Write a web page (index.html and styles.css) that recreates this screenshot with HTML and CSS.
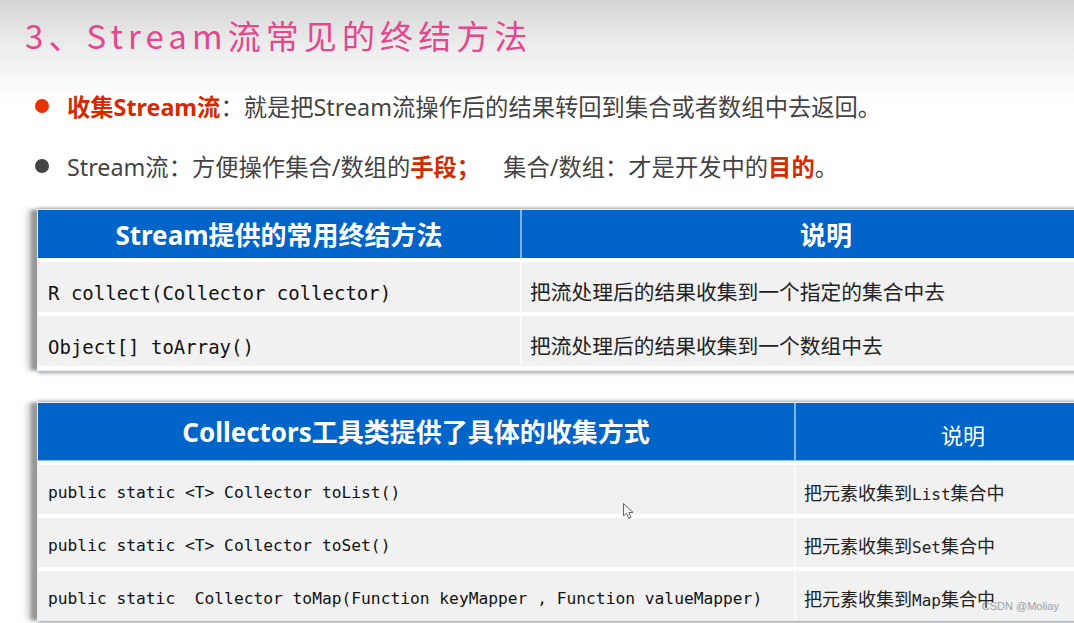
FILE: index.html
```html
<!DOCTYPE html>
<html lang="zh">
<head>
<meta charset="utf-8">
<title>Stream流常见的终结方法</title>
<link rel="stylesheet" href="styles.css">
</head>
<body>
<main class="slide">
  <h1 class="title">3、Stream流常见的终结方法</h1>
  <ul class="points">
    <li class="point point-red"><span class="dot"></span><p><b>收集Stream流</b>：就是把Stream流操作后的结果转回到集合或者数组中去返回。</p></li>
    <li class="point"><span class="dot"></span><p>Stream流：方便操作集合/数组的<b>手段；</b><span class="wide"></span>集合/数组：才是开发中的<b>目的</b>。</p></li>
  </ul>
  <section class="table table-one">
    <div class="cell head main-head">Stream提供的常用终结方法</div>
    <div class="cell head main-head">说明</div>
    <div class="cell code big">R collect(Collector collector)</div>
    <div class="cell desc big">把流处理后的结果收集到一个指定的集合中去</div>
    <div class="cell code big">Object[] toArray()</div>
    <div class="cell desc big">把流处理后的结果收集到一个数组中去</div>
  </section>
  <section class="table table-two">
    <div class="cell head main-head">Collectors工具类提供了具体的收集方式</div>
    <div class="cell head sub-head">说明</div>
    <div class="cell code">public static &lt;T&gt; Collector toList()</div>
    <div class="cell desc"><span>把元素收集到<span class="mono">List</span>集合中</span></div>
    <div class="cell code">public static &lt;T&gt; Collector toSet()</div>
    <div class="cell desc"><span>把元素收集到<span class="mono">Set</span>集合中</span></div>
    <div class="cell code">public static&nbsp; Collector toMap(Function keyMapper , Function valueMapper)</div>
    <div class="cell desc"><span>把元素收集到<span class="mono">Map</span>集合中</span></div>
  </section>
</main>
<svg class="cursor" width="14" height="18" viewBox="0 0 14 18" aria-hidden="true"><path d="M1.5 1.5 V14 L4.6 11.4 L6.8 16.4 L9 15.4 L6.9 10.6 L11 10.4 Z" fill="#f4f4f4" stroke="#666" stroke-width="1"/></svg>
<div class="watermark">CSDN @Moliay</div>
</body>
</html>
```
FILE: styles.css
```css
* { box-sizing: border-box; }
html, body { margin: 0; height: 100%; }
body {
  width: 1074px;
  height: 623px;
  overflow: hidden;
  position: relative;
  background: #fff;
  font-family: "Noto Sans", "Noto Sans CJK SC", sans-serif;
}
.slide {
  height: 623px;
  padding: 15px 0 0 38px;
  background: linear-gradient(#d6d6d6 0, #eeeeee 50px, #ffffff 105px);
}
.title {
  margin: 0 0 0 -13px;
  height: 40px;
  font: 400 33px/40px "Noto Sans CJK SC", sans-serif;
  color: #e5478f;
  letter-spacing: 5.1px;
  white-space: nowrap;
}
.points {
  list-style: none;
  margin: 21px 0 0 -3px;
  padding: 0;
}
.point {
  display: flex;
  align-items: center;
  gap: 18px;
  height: 60px;
  color: #444;
  font-size: 23.3px;
  white-space: nowrap;
}
.point p { margin: 0; }
.point b { color: #d32a00; font-weight: 700; }
.dot {
  width: 14px;
  height: 14px;
  border-radius: 50%;
  background: #444;
  flex: none;
}
.point-red .dot { background: #e63200; }
.wide { display: inline-block; width: 23px; }
.table {
  display: grid;
  width: 1100px;
  background: #fff;
  box-shadow: 0 0 0 1px #e4edf3, -7px 0 3px 0 #989898, -11px 0 6px 0 #d0d0d0, 0 -2px 3px 0 #a8a8a8, 0 3px 4px 0 #a8a8a8;
}
.table-one {
  margin-top: 14px;
  grid-template-columns: 482px 1fr;
  grid-template-rows: 48px 54px 54px;
  padding-bottom: 4px;
}
.table-two {
  margin-top: 33px;
  grid-template-columns: 756px 1fr;
  grid-template-rows: 58px 53px 53px 53px;
}
.cell {
  display: flex;
  align-items: center;
  padding: 0 10px;
  white-space: nowrap;
  color: #222;
}
.head {
  justify-content: center;
  background: #0064c8;
  color: #fff;
  border-left: 2px solid #7fb2e5;
}
.head:nth-child(odd) { border-left: 0; }
.table-two .head { border-bottom: 1px solid #8cc4f0; }
.main-head { font-weight: 700; font-size: 26px; }
.table-two .main-head { padding-bottom: 2px; }
.sub-head { font-size: 22px; padding: 4px 8px 0 0; }
.table-one .head:nth-child(2) { padding-right: 18px; }
.code, .desc {
  background: #f1f1f1;
  border-top: 4px solid #fff;
}
.desc { border-left: 2px solid #fafafa; padding-left: 8px; padding-top: 4px; }
.code { font: 16.25px "DejaVu Sans Mono", monospace; padding-top: 6px; color: #111; }
.code.big { font-size: 19px; padding-top: 12px; }
.desc { font-size: 18px; }
.desc.big { font-size: 20.75px; padding-top: 8px; }
.mono { font: 16px "DejaVu Sans Mono", monospace; }
.cursor { position: absolute; left: 622px; top: 502px; }
.watermark {
  position: absolute;
  right: 15px;
  top: 600px;
  font: 11px "Liberation Sans", sans-serif;
  color: #9aa0a6;
}
```
